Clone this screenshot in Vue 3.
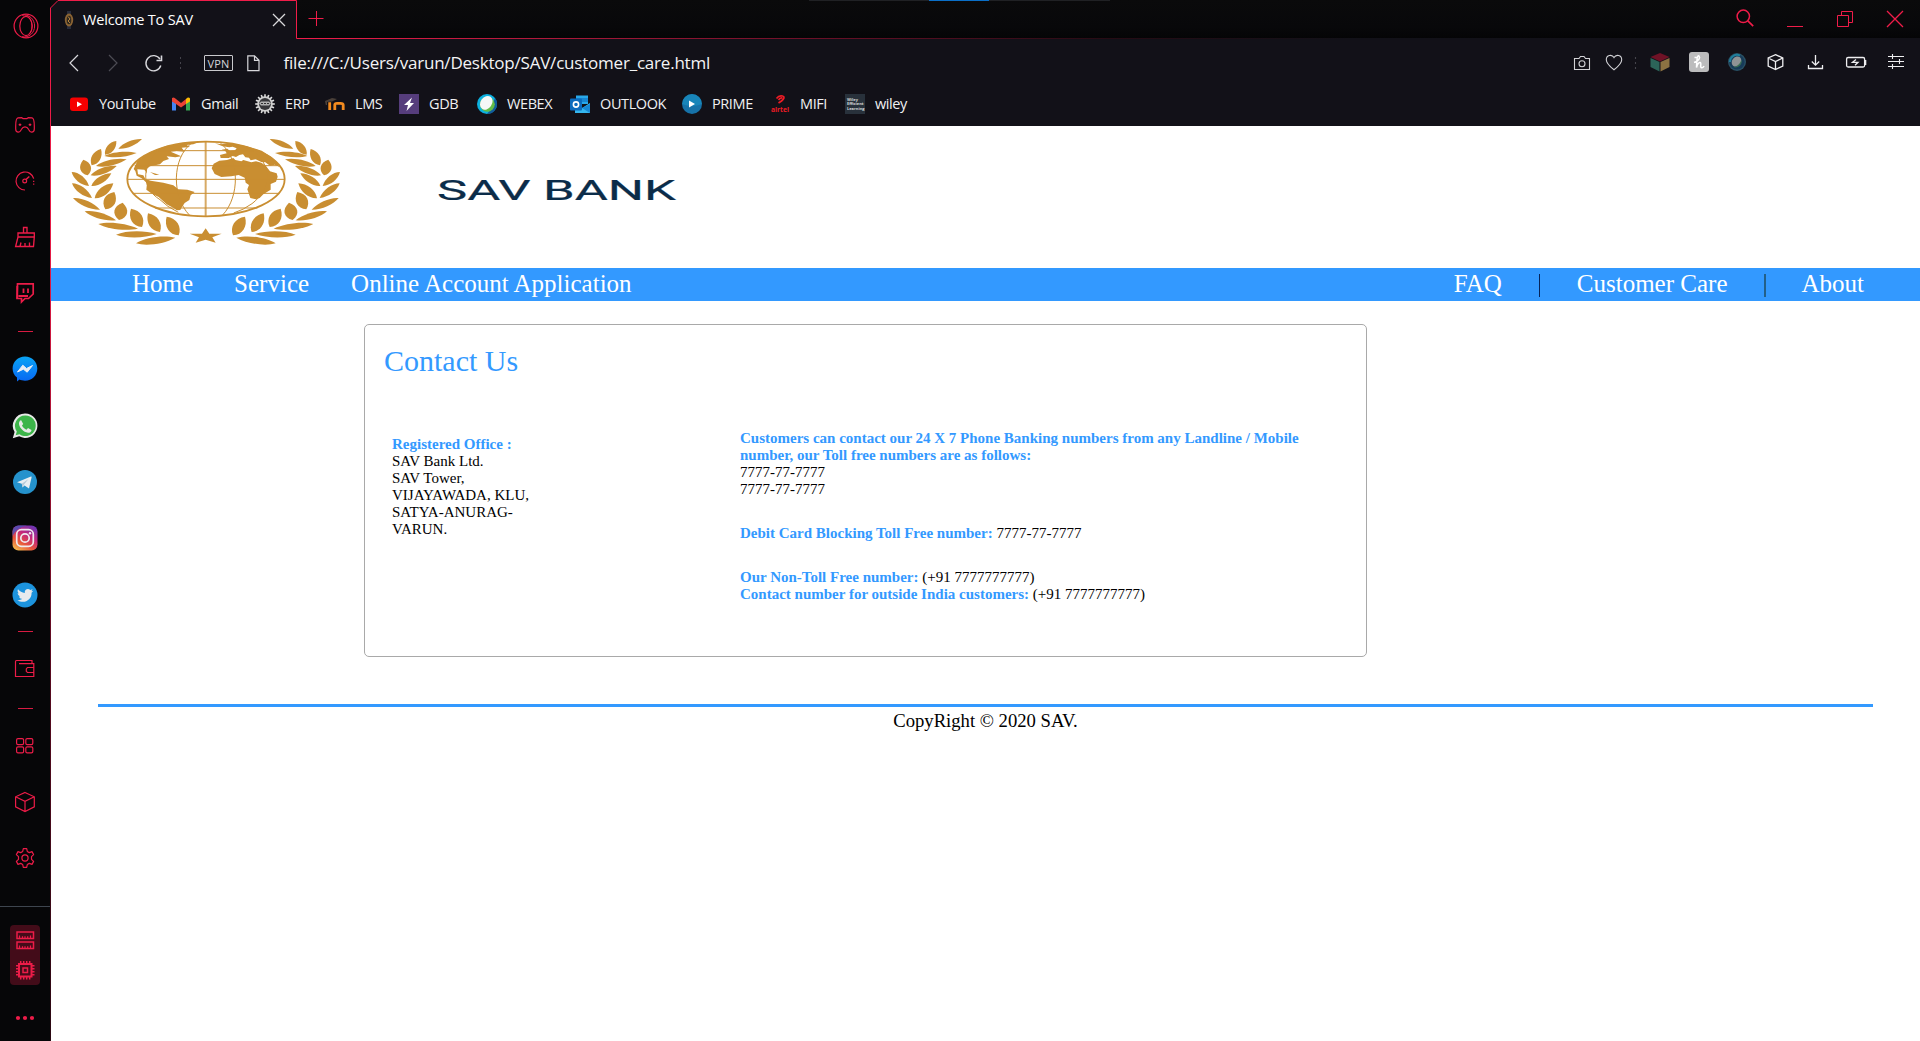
<script setup>
// Tip-to-tip coordinates and width of every leaf in one half of the wreath
const leaves = [
  [205, 71, 276, 42, 16], [165, 89, 199, 48, 22], [163, 93, 260, 84, 15],
  [125, 121, 153, 72, 26], [138, 123, 230, 103, 17], [113, 151, 100, 104, 32],
  [122, 151, 200, 123, 18], [65, 141, 117, 183, 20], [124, 183, 184, 145, 20],
  [66, 175, 126, 219, 20], [134, 220, 190, 175, 24], [69, 219, 150, 254, 18],
  [166, 253, 193, 201, 34], [104, 259, 198, 286, 18], [207, 285, 218, 233, 38],
  [145, 297, 264, 311, 18], [276, 306, 243, 251, 34], [198, 329, 320, 327, 18],
  [330, 321, 294, 265, 32], [258, 355, 376, 338, 20], [386, 331, 350, 275, 34]
].map(([x1, y1, x2, y2, w]) => {
  const dx = x2 - x1
  const dy = y2 - y1
  const len = Math.hypot(dx, dy)
  const nx = (-dy / len) * w * 0.68
  const ny = (dx / len) * w * 0.68
  const at = (t, s) => `${(x1 + dx * t + nx * s).toFixed(1)} ${(y1 + dy * t + ny * s).toFixed(1)}`
  return `M${x1} ${y1}C${at(0.25, 1)} ${at(0.7, 1)} ${x2} ${y2}C${at(0.7, -1)} ${at(0.25, -1)} ${x1} ${y1}Z`
})

const bookmarks = [
  { id: 'youtube', name: 'YouTube', width: 102 },
  { id: 'gmail', name: 'Gmail', width: 84 },
  { id: 'erp', name: 'ERP', width: 70 },
  { id: 'lms', name: 'LMS', width: 74 },
  { id: 'gdb', name: 'GDB', width: 78 },
  { id: 'webex', name: 'WEBEX', width: 93 },
  { id: 'outlook', name: 'OUTLOOK', width: 112 },
  { id: 'prime', name: 'PRIME', width: 88 },
  { id: 'mifi', name: 'MIFI', width: 75 },
  { id: 'wiley', name: 'wiley', width: 80 }
]
const teeth = Array.from({ length: 16 }, (_, i) => i * 22.5)
const pins = [5, 8, 11, 14]
</script>

<template>
  <div class="window">
    <aside class="side">
      <div class="slot opera">
        <svg width="26" height="26" viewBox="0 0 26 26"><circle cx="13" cy="13" r="11.9" /><ellipse cx="13" cy="13" rx="6.2" ry="9.6" /><path d="M9 2.2C16 1 21.6 6 21.6 13S16 25 9 23.8M16 5C20 9 20 17 16 21" stroke-width="1" /></svg>
      </div>
      <div class="slot">
        <svg width="22" height="18" viewBox="0 0 22 18"><path d="M4 1.9 7.6 1.6 9 2.6H13L14.4 1.6 18 1.9C20 2.2 20.3 6 20.3 10V13C20.3 15.5 19 16.2 17.6 16.2 16 16.2 15.5 15 14.5 13.2 13.8 11.8 13.2 10.8 11 10.8S8.2 11.8 7.5 13.2C6.5 15 6 16.2 4.4 16.2 3 16.2 1.7 15.5 1.7 13V10C1.7 6 2 2.2 4 1.9Z" /><path d="M4.7 8.7H7.3M6 7.4V10M14.7 8.7H17.3M16 7.4V10" /></svg>
      </div>
      <div class="slot">
        <svg width="22" height="22" viewBox="0 0 22 22"><path d="M11 20A9 9 0 1 1 19.7 8.6" /><circle cx="10.7" cy="11" r="1.9" /><path d="M12 9.5 15.3 6.5" stroke-width="1.5" /><path d="M19.7 10.7V15" stroke-dasharray="1.3 1.5" /></svg>
      </div>
      <div class="slot">
        <svg width="22" height="22" viewBox="0 0 22 22"><path d="M9.5 7V1.5H13V7M4 7H20.3V11H4ZM4 11 1.6 20.5H19.5L20.3 11M6 20.5 7 16.5M11 20.5V17M15.5 20.5V16.5" stroke-width="1.35" /></svg>
      </div>
      <div class="slot">
        <svg width="20" height="22" viewBox="0 0 20 22"><path d="M2.5 1.8H18.2V12L13.5 16.5H10L6.5 20V16.5H2Z" stroke-width="1.7" /><path d="M2.3 4V16.5M3.5 14H13M8.5 6.5V11M13 6.5V11" stroke-width="1.8" /></svg>
      </div>
      <i class="dash one"></i>
      <div class="slot app">
        <svg class="pic" width="26" height="26" viewBox="0 0 26 26"><defs><linearGradient id="msg" x2="0" y2="1"><stop stop-color="#09a4f5" /><stop offset="1" stop-color="#0867f2" /></linearGradient></defs><path d="M13 .5C20 .5 25.3 5.5 25.3 12.5S20 24.7 13 24.7C11 24.7 8.5 24 7.5 23.5L5 25.5V21.5C2 19.5.6 16 .6 12.5.6 5.5 6 .5 13 .5Z" fill="url(#msg)" /><path d="M5.5 16 10.8 9.2 14.5 12.5 20.5 9.5 15.2 16.2 11.4 13.2Z" fill="#e8edf4" stroke="#e8edf4" /></svg>
      </div>
      <div class="slot app">
        <svg class="pic" width="26" height="26" viewBox="0 0 26 26"><path d="M13.2.5A12.2 12.2 0 1 1 7.2 23.3L.8 25.2 2.6 19A12.2 12.2 0 0 1 13.2.5Z" fill="#e7e9e7" /><path d="M13.2 2.5A10.3 10.3 0 1 1 7.5 21.2L3.7 22.3 4.8 18.6A10.3 10.3 0 0 1 13.2 2.5Z" fill="#3db54a" /><path d="M9.2 7.2 11.2 11 10 12.5C11 14.5 12.5 16 14.5 16.8L16 15 19.5 17C19.5 19 17.5 20 16 19.8 11.5 19 7.5 15 7 11 6.8 9 8 7 9.2 7.2Z" fill="#e7e9e7" /></svg>
      </div>
      <div class="slot app">
        <svg class="pic" width="26" height="26" viewBox="0 0 26 26"><circle cx="13" cy="13" r="12" fill="#2592cc" /><path d="M5 13.2 19 7.5Q20 7.3 19.5 8.8L17 19.5 12.5 16.5 10.5 18.5 9.8 14.7Z" fill="#e8eef2" /><path d="M9.8 14.7 16.5 10 12 15.5 10.5 18.5Z" fill="#b5cad8" /></svg>
      </div>
      <div class="slot app">
        <svg class="pic" width="26" height="26" viewBox="0 0 26 26"><defs><linearGradient id="ig" x1=".2" y1="1" x2=".8" y2="0"><stop stop-color="#f5b84e" /><stop offset=".3" stop-color="#e8573b" /><stop offset=".62" stop-color="#c4267c" /><stop offset="1" stop-color="#6b36b5" /></linearGradient></defs><rect x=".5" y=".5" width="25" height="25" rx="6" fill="url(#ig)" /><path d="M.5 11V6.5A6 6 0 0 1 6.5.5H15Q4 3 .5 11Z" fill="#4453b8" opacity=".8" /><g fill="none" stroke="#efeaee" stroke-width="1.7"><rect x="4.7" y="4.7" width="16.6" height="16.6" rx="4.6" /><circle cx="13" cy="13" r="4.2" /></g><circle cx="18" cy="8.3" r="1.2" fill="#efeaee" /></svg>
      </div>
      <div class="slot app">
        <svg class="pic" width="26" height="26" viewBox="0 0 26 26"><circle cx="13" cy="13" r="12.5" fill="#1c93dd" /><path d="M6 7.3C8 9.5 10 10.8 12.8 11 12.2 7.5 16 5.8 18.3 8L20.6 7.2 19.4 9.2 21.3 8.8 19.6 10.7C19.8 16 15.5 19.8 11 19.8 9 19.8 7 19.3 5.4 18.3 7.3 18.4 9 17.8 10.2 16.8 8.5 16.7 7.4 15.7 7 14.4H8.2C6.7 13.9 5.6 12.5 5.7 11L7 11.4C5.6 10.3 5.2 8.7 6 7.3Z" fill="#e6eaed" /></svg>
      </div>
      <i class="dash two"></i>
      <div class="slot app">
        <svg width="22" height="20" viewBox="0 0 22 20"><path d="M18 4.5V1.5H2.5Q1.5 1.5 1.5 3V17.5H19.8V4.7H5M19.8 8.5H13.5L12.3 10V12.3L13.5 13.5H19.8" /></svg>
      </div>
      <i class="dash three"></i>
      <div class="slot">
        <svg width="20" height="18" viewBox="0 0 20 18"><rect x="1.6" y="1.6" width="7" height="6" rx="1.4" /><rect x="10.8" y="1.6" width="7" height="6" rx="1.4" /><rect x="1.6" y="9.9" width="7" height="6" rx="1.4" /><rect x="10.8" y="9.9" width="7" height="6" rx="1.4" /></svg>
      </div>
      <div class="slot">
        <svg width="22" height="22" viewBox="0 0 22 22"><path d="M11 1.5 20.3 5.8V15.8L11 20.5 1.6 15.8V5.8ZM1.6 5.8 11 10.3 20.3 5.8M11 10.3V20.5" /></svg>
      </div>
      <div class="slot">
        <svg width="20" height="22" viewBox="0 0 20 22"><path d="M8.3 1.6H11.7L12.3 4.5 14.3 5.6 17 4.6 18.6 7.6 16.5 9.7V12.3L18.6 14.4 17 17.4 14.3 16.4 12.3 17.5 11.7 20.4H8.3L7.7 17.5 5.7 16.4 3 17.4 1.4 14.4 3.5 12.3V9.7L1.4 7.6 3 4.6 5.7 5.6 7.7 4.5Z" stroke-linejoin="round" /><circle cx="10" cy="11" r="3.1" /></svg>
      </div>
      <div class="monitor">
        <div class="box">
          <svg width="20" height="20" viewBox="0 0 20 20"><path d="M2 2H18.5V8.5H2ZM2 12H18.5V18.5H2Z" stroke-width="1.5" /><path d="M4.5 5.5V8M7.5 6.2V8M10 6.2V8M12.7 6.2V8M15.5 5.5V8M4.5 15.5V18M7.5 16.2V18M10 16.2V18M12.7 16.2V18M15.5 15.5V18" /></svg>
          <svg width="20" height="20" viewBox="0 0 20 20"><rect x="4" y="4" width="12.5" height="12.5" stroke-width="2" /><rect x="8" y="8" width="4.5" height="4.5" stroke-width="1.5" /><path v-for="p in pins" :key="p" :d="`M${p + 0.7} 1V4M${p + 0.7} 16.5V19.5M1 ${p + 0.7}H4M16.5 ${p + 0.7}H19.5`" stroke-width="1.5" /></svg>
        </div>
        <svg class="dots" width="20" height="6" viewBox="0 0 20 6"><circle cx="3" cy="3" r="2.1" /><circle cx="10" cy="3" r="2.1" /><circle cx="17" cy="3" r="2.1" /></svg>
      </div>
    </aside>
    <div class="edge"></div>

    <section class="main">
      <header class="titlebar">
        <div class="tab">
          <svg class="outline" width="249" height="39" viewBox="0 0 249 39"><path d="M.5 39V8L8 .5H246.5V38.5H249V39Z" fill="#121118" /><path d="M.5 39V8L8 .5H246.5V38.5H249" fill="none" stroke="#f01c49" /></svg>
          <svg class="favicon" width="10" height="18" viewBox="0 0 10 18"><path d="M3 0H7V3H3ZM3 15H7V18H3Z" fill="#292c3b" /><ellipse cx="5" cy="9" rx="4.2" ry="6.5" fill="#8a6333" /><ellipse cx="5" cy="9" rx="2.3" ry="4.3" fill="#30281f" /><path d="M4 5.5 6 8 4 10 6 12" stroke="#b4823b" fill="none" /></svg>
          <span class="tab-title">Welcome To SAV</span>
          <svg class="tab-close" width="14" height="14" viewBox="0 0 14 14"><path d="M1 1 13 13M13 1 1 13" stroke="#d9d9dc" stroke-width="1.3" /></svg>
        </div>
        <svg class="plus" width="16" height="16" viewBox="0 0 16 16"><path d="M.5 7.5H15.5M8.5 0V15" stroke="#f01c49" /></svg>
        <div class="strip"></div>
        <div class="win-actions">
          <svg width="18" height="18" viewBox="0 0 18 18"><circle cx="7.3" cy="7.3" r="6.2" stroke-width="1.5" /><path d="M11.8 11.8 17.2 17.2" stroke-width="1.7" /></svg>
          <svg width="16" height="18" viewBox="0 0 16 18"><path d="M0 17.5H16" /></svg>
          <svg width="16" height="18" viewBox="0 0 16 18"><path d="M.5 6.5H11.5V17.5H.5ZM4.5 6.5V2.5H15.5V13.5H11.5" /></svg>
          <svg width="16" height="18" viewBox="0 0 16 18"><path d="M0 2 16 18M16 2 0 18" stroke-width="1.3" /></svg>
        </div>
      </header>

      <div class="toolbar">
        <svg class="back" width="12" height="18" viewBox="0 0 12 18"><path d="M10 1 2 9 10 17" /></svg>
        <svg class="forward" width="12" height="18" viewBox="0 0 12 18"><path d="M2 1 10 9 2 17" /></svg>
        <svg class="reload" width="18" height="18" viewBox="0 0 18 18"><path d="M15.8 11.5A7.6 7.6 0 1 1 15 5.2" stroke-width="1.4" /><path d="M16.5 1.5V6.5H11.5" stroke-width="1.6" /></svg>
        <i class="sep"></i>
        <span class="vpn">VPN</span>
        <svg class="file" width="13" height="17" viewBox="0 0 13 17"><path d="M.8.8H7.5L12 5.3V15.7H.8ZM7.5.8V5.3H12" /></svg>
        <span class="url">file:///C:/Users/varun/Desktop/SAV/customer_care.html</span>
        <svg class="tools" width="336" height="24" viewBox="1572 51 336 24">
          <g fill="none" stroke="#d2d2d6" stroke-width="1.1">
            <path d="M1574.5 58.5H1579L1580.5 56.5H1584L1585.5 58.5H1589.5V69.5H1574.5Z" /><circle cx="1582" cy="63.7" r="3" />
            <path d="M1614 69.8C1609 65.8 1606.3 63 1606.3 59.7 1606.3 54.8 1612 54 1614 57.6 1616 54 1621.7 54.8 1621.7 59.7 1621.7 63 1619 65.8 1614 69.8Z" />
            <path d="M1635.5 57V70" stroke="#45444c" stroke-dasharray="2 3" />
          </g>
          <path d="M1660 53 1669.5 57 1660 61.5 1650.5 57Z" fill="#6f1226" /><path d="M1650.5 58 1659.5 62V71.5L1650.5 67Z" fill="#2c6459" /><path d="M1669.5 58 1660.5 62V71.5L1669.5 67Z" fill="#8c7242" />
          <rect x="1689" y="52" width="20" height="20" rx="3" fill="#bcbcbd" /><path d="M1694 62.5C1699 61 1700.5 57.5 1699 56 1697 55 1696.8 60 1696.5 67.5C1697.5 62.5 1700.5 61.5 1700.8 63.5 1701 65 1700 68 1702 67.8 1703 67.7 1703.7 66.8 1704 66M1694.5 57.5H1697" fill="none" stroke="#fff" stroke-width="1.5" />
          <circle cx="1737" cy="62" r="9" fill="#295064" /><circle cx="1737" cy="62" r="7.6" fill="#173b59" /><path d="M1730 62A7 7 0 0 1 1740 55.6" fill="none" stroke="#1f7f9c" stroke-width="2" /><ellipse cx="1736.5" cy="61.5" rx="4.4" ry="5.4" transform="rotate(40 1736.5 61.5)" fill="#8f9395" /><path d="M1733 67Q1739 66.5 1741.5 60C1743 64 1738 69 1733 67Z" fill="#396d53" />
          <g fill="none" stroke="#eeeef0" stroke-width="1.3">
            <path d="M1775.5 54.7 1782.8 58V66L1775.5 69.5 1768.2 66V58ZM1768.2 58 1775.5 61.5 1782.8 58M1775.5 61.5V69.5" />
            <path d="M1815.5 55V65M1811.8 61.5 1815.5 65.2 1819.2 61.5M1808.5 65V68.5H1822.5V65" />
            <rect x="1846.6" y="57.5" width="18" height="9.5" rx="1.5" /><path d="M1865.5 60V65" stroke-width="1.6" /><path d="M1856 59.5 1852.5 62.3H1858L1855 65.3" />
            <path d="M1888 56.5H1904M1888 61.5H1904M1888 66.5H1904M1892.5 54V59M1899.5 59V64M1892.5 64V69" stroke-width="1.1" />
          </g>
        </svg>
      </div>

      <nav class="bookmarks">
        <div v-for="b in bookmarks" :key="b.id" class="bookmark" :style="{ width: b.width + 'px' }">
          <svg width="20" height="20" viewBox="0 0 20 20">
            <g v-if="b.id === 'youtube'"><rect x="1" y="3.5" width="18" height="13.5" rx="3" fill="#f60000" /><path d="M8 7.5V13L13 10.2Z" fill="#fff" /></g>
            <g v-else-if="b.id === 'gmail'"><path d="M1 7V16.5H5V9Z" fill="#4285f4" /><path d="M19 7V16.5H15V9Z" fill="#34a853" /><path d="M1 7.5V4Q3 2.5 5 5L10 9 15 5V10L10 13.6 5 10Z" fill="#ea4335" /><path d="M15 5Q17.5 2.5 19 4.5V7.5L15 10Z" fill="#fbbc04" /></g>
            <g v-else-if="b.id === 'erp'"><path v-for="t in teeth" :key="t" d="M10 .2V3" stroke="#ddd" stroke-width="1.6" :transform="`rotate(${t} 10 10)`" /><circle cx="10" cy="10" r="7.8" fill="#d0d0d0" /><circle cx="10" cy="10" r="6" fill="#37373a" /><path d="M4 9.5 6 7.5H14L16 9.5 14 11.5H6Z" fill="#b0b0b0" /><path d="M6 9.5H14" stroke="#333" stroke-dasharray="2 1" /></g>
            <g v-else-if="b.id === 'lms'"><path d="M0 7 7 4 12 5 7 7.5 2 8V11H.8Z" fill="#4a4039" /><path d="M4.7 16V8.2M9.8 16V10.8Q9.8 9.3 12 9.3H15.5Q18.2 9.3 18.2 11V16" fill="none" stroke="#f28b1f" stroke-width="2.8" /></g>
            <g v-else-if="b.id === 'gdb'"><rect width="20" height="20" fill="#563d7c" /><path d="M13 3.5 5 11H9L7.5 17 15 9H11Z" fill="#fff" /></g>
            <g v-else-if="b.id === 'webex'"><circle cx="10" cy="10" r="10" fill="#0cb0df" /><path d="M10 20A10 10 0 0 0 18 4L14 15Z" fill="#115c9b" /><circle cx="10.3" cy="10.2" r="7.5" fill="#63bc47" /><ellipse cx="9.3" cy="8.8" rx="5.7" ry="7.4" transform="rotate(35 9.3 8.8)" fill="#f5f8f7" /></g>
            <g v-else-if="b.id === 'outlook'"><path d="M6 1.5H18V10H6Z" fill="#29a8e9" /><path d="M6 4H18V8H6Z" fill="#1786d2" /><path d="M5 10 12 14 20 9V19H5Z" fill="#35b7ef" /><path d="M12 14 20 19V10Z" fill="#1687d4" /><rect y="4.5" width="12" height="12" rx="1" fill="#0b6bbe" /><circle cx="6" cy="10.5" r="2.6" fill="none" stroke="#fff" stroke-width="1.6" /></g>
            <g v-else-if="b.id === 'prime'"><circle cx="10" cy="10" r="10" fill="#1672a8" /><path d="M0 10A10 10 0 0 1 20 10Q10 14 0 10Z" fill="#1c96c6" opacity=".55" /><path d="M7 6.5V13.5L13 10Z" fill="#fff" /></g>
            <g v-else-if="b.id === 'mifi'"><path d="M6.5 4.5Q9 1 12.5 2T11.5 7L8.5 9M12.5 4Q10 3.5 8.5 6" fill="none" stroke="#ee1c25" stroke-width="1.7" /><text x="1" y="18" class="airtel" textLength="18" lengthAdjust="spacingAndGlyphs">airtel</text></g>
            <g v-else><rect width="20" height="20" fill="#28313b" /><text class="wiley" x="2" y="6.5">Wiley</text><text class="wiley" x="2" y="11.3">Efficient</text><text class="wiley" x="2" y="16">Learning</text></g>
          </svg>
          <span>{{ b.name }}</span>
        </div>
      </nav>

      <main class="page">
        <div class="brand">
          <svg class="emblem" width="273.33" height="113.33" viewBox="60 30 820 340">
            <g fill="#c98e31">
              <path v-for="(d, i) in leaves" :key="i" :d="d" />
              <g transform="translate(935 0) scale(-1 1)"><path v-for="(d, i) in leaves" :key="i" :d="d" /></g>
              <path d="M467 310 478 326 515 326 487 337 497 353 467 344 437 353 447 337 419 326 456 326Z" />
              <path d="M251 132 262 108 300 82 350 62 430 52 450 50 430 58 410 60 420 66 395 68 404 80 380 78 362 80 394 94 376 97 350 94 357 102 340 108 330 118 300 124 290 132 291 145 283 134 262 133 264 148 280 151 286 162 302 167 340 173 370 181 385 193 412 194 434 201 422 211 418 225 404 234 396 246 391 255 380 256 372 250 350 238 326 216 306 206 289 194 291 174 275 160 260 152 256 138Z" />
              <path d="M300 141 318 146 328 150 315 150Z" />
              <path d="M485 130 491 116 508 107 531 105 550 99 556 105 574 109 580 105 604 112 618 109 634 113 648 123 660 139 680 145 683 155 678 170 662 177 662 194 640 208 629 219 617 223 601 219 592 193 597 180 587 173 584 158 566 150 544 154 514 156 494 147Z" />
              <path d="M495 55 515 58 540 55 590 63 635 77 665 96 681 112 688 126 674 119 660 122 646 112 634 111 617 103 602 106 597 98 586 97 579 88 568 90 558 96 548 93 536 99 512 99 510 90 530 85 526 78 515 74 532 71 540 78 555 76 560 70 548 65 538 67 518 64Z" />
            </g>
            <g fill="none" stroke="#c98e31">
              <ellipse cx="468" cy="162" rx="236" ry="112" stroke-width="5.5" />
              <g stroke-width="3">
                <path d="M467 50V274" stroke-width="6" opacity=".75" /><path d="M326 77H610M254 122H682M232 163H704M250 205H686M315 249H622" />
                <path d="M425 54C365 100 365 215 418 270M511 54C570 100 570 215 518 270M318 84C275 130 275 190 330 224Q350 245 385 262M618 84C665 130 665 190 606 236Q580 255 551 264" />
              </g>
            </g>
          </svg>
          <svg class="wordmark" width="244" height="30" viewBox="0 0 244 30"><text x="2" y="25" textLength="239" lengthAdjust="spacingAndGlyphs">SAV BANK</text></svg>
        </div>

        <nav class="menu">
          <a class="home">Home</a><a class="service">Service</a><a>Online Account Application</a>
          <div class="right"><a>FAQ</a><i></i><a>Customer Care</a><i class="second"></i><a>About</a></div>
        </nav>

        <section class="card">
          <h1>Contact Us</h1>
          <div class="columns">
            <address><b>Registered Office :</b><br>SAV Bank Ltd.<br>SAV Tower,<br>VIJAYAWADA, KLU,<br>SATYA-ANURAG-<br>VARUN.</address>
            <div class="phones">
              <p><b>Customers can contact our 24 X 7 Phone Banking numbers from any Landline / Mobile<br>number, our Toll free numbers are as follows:</b><br>7777-77-7777<br>7777-77-7777</p>
              <p><b>Debit Card Blocking Toll Free number:</b> 7777-77-7777</p>
              <p><b>Our Non-Toll Free number:</b> (+91 7777777777)<br><b>Contact number for outside India customers:</b> (+91 7777777777)</p>
            </div>
          </div>
        </section>

        <footer>CopyRight © 2020 SAV.</footer>
      </main>
    </section>
  </div>
</template>

<style>
body { margin: 0; background: #fff; overflow: hidden; }
</style>

<style scoped>
* { box-sizing: border-box; }
svg { display: block; flex: none; overflow: visible; }
.window { display: flex; width: 1920px; height: 1041px; font-family: "Open Sans", "Noto Sans", sans-serif; overflow: hidden; }
.side { width: 50px; background: #060608; display: flex; flex-direction: column; }
.side svg:not(.pic) { fill: none; stroke: #ec1c48; stroke-width: 1.2; }
.slot { height: 56px; flex: none; display: flex; align-items: center; justify-content: center; }
.slot.opera { height: 51px; margin-bottom: 46px; padding-left: 1px; }
.slot.app { height: 56.4px; }
.dash { height: 1px; width: 15px; flex: none; background: #d81b42; margin: 10px 0 10px 18px; }
.dash.one { margin-bottom: 9px; }
.dash.two { margin: 8px 0 9px 18px; }
.dash.three { margin: 11px 0 9px 18px; }
.monitor { margin-top: auto; height: 135px; flex: none; border-top: 1px solid #3e454f; display: flex; flex-direction: column; align-items: center; }
.box { width: 30px; height: 60px; margin-top: 18px; border-radius: 4px; background: #430c19; display: flex; flex-direction: column; align-items: center; justify-content: space-between; padding: 5px 0; }
.side .monitor .dots { fill: #ec1c48; stroke: none; margin-top: 30px; }
.edge { width: 1px; margin-top: 8px; background: linear-gradient(#f01c49 0%, #e31a45 25%, #5a0a20 63%, #2a0812 100%); box-shadow: 0 -8px 0 #070709; }
.main { width: 1869px; display: flex; flex-direction: column; }

.titlebar { height: 39px; position: relative; display: flex; align-items: flex-start; background: linear-gradient(#0a0a0b, #08080a 70%, #050506); }
.titlebar::after { content: ""; position: absolute; left: 246px; right: 0; top: 38px; height: 1px; background: linear-gradient(90deg, #f01c49, #b0193b 15%, #6b1027 32%, #260b14 50%, #121118 65%); }
.tab { position: relative; width: 247px; height: 39px; display: flex; align-items: center; }
.outline { position: absolute; left: -1px; top: 0; }
.favicon { position: relative; margin-left: 13px; }
.tab-title { position: relative; margin-left: 9px; width: 175px; color: #fff; font-size: 14.5px; letter-spacing: -.18px; white-space: nowrap; line-height: 38px; }
.tab-close { position: relative; margin-left: 14px; }
.plus { margin: 11px 0 0 10px; }
.strip { height: 1px; width: 301px; margin-left: 485px; background: linear-gradient(90deg, #202124 120px, #0a6fc8 120px, #0a6fc8 180px, #202124 180px); }
.win-actions { margin: 9px 17px 0 auto; display: flex; gap: 33px; fill: none; stroke: #f01c49; }
.win-actions svg:nth-child(n+3) { margin-left: 1px; }

.toolbar { height: 48px; background: #121118; display: flex; align-items: center; fill: none; stroke: #d8d8dc; stroke-width: 1.2; padding-right: 12px; }
.back { margin-left: 16.5px; }
.forward { margin-left: 27.5px; stroke: #4d4c54; }
.reload { margin-left: 26px; }
.sep { width: 1px; height: 13px; margin-left: 17px; background: repeating-linear-gradient(#45444c 0 2px, transparent 2px 5px); }
.vpn { width: 29px; height: 16px; margin-left: 23px; border: 1px solid #c9c9cd; border-radius: 1px; color: #d4d4d8; font-size: 11px; line-height: 15px; text-align: center; letter-spacing: .1px; }
.file { margin-left: 13.5px; }
.url { margin-left: 24px; color: #f4f4f5; font-size: 17px; letter-spacing: -.21px; line-height: 24px; white-space: nowrap; }
.tools { margin-left: auto; stroke: none; }

.bookmarks { height: 39px; background: #121118; padding: 0 0 5px 18px; display: flex; align-items: center; }
.bookmark { display: flex; align-items: center; gap: 10px; color: #f0f0f2; font-size: 14.5px; letter-spacing: -.4px; line-height: 20px; white-space: nowrap; flex: none; }
.airtel { font: bold 7px "Open Sans", sans-serif; fill: #ee1c25; letter-spacing: 0; }
.wiley { font: bold 4px "Open Sans", sans-serif; fill: #d5d8da; letter-spacing: 0; }

.page { flex: 1; background: #fff; font-family: "Liberation Serif", "Times New Roman", serif; color: #000; }
.brand { height: 142px; display: flex; padding: 9px 0 0 18.5px; }
.wordmark { margin: 40px 0 0 92px; }
.wordmark text { font: 400 27px Roboto, sans-serif; fill: #0b2c49; stroke: #0b2c49; stroke-width: .2; }
.menu { height: 33px; background: #3399ff; color: #fff; display: flex; align-items: flex-start; padding-left: 81px; font-size: 25px; line-height: 31px; white-space: nowrap; }
.home { margin-right: 41px; }
.service { margin-right: 42px; }
.right { margin-left: auto; margin-right: 56px; display: flex; }
.right i { width: 1px; height: 23px; margin: 6px 37px 0; background: #06245a; }
.right i.second { width: 2px; background: #236089; margin: 6px 36px 0; }
.card { width: 1003px; height: 333px; margin: 23px 0 0 313px; border: 1px solid #a9a9a9; border-radius: 5px; }
h1 { margin: 19px 0 0 19px; font-size: 30px; font-weight: 400; line-height: 34px; color: #3399ff; }
.columns { display: flex; font-size: 15px; line-height: 17px; white-space: nowrap; padding-top: 52px; }
b { color: #3399ff; font-weight: 700; }
address { font-style: normal; margin: 6px 0 0 27px; width: 348px; }
.phones p { margin: 0 0 27px; }
footer { width: 1775px; margin: 47px 0 0 47px; border-top: 3px solid #3399ff; text-align: center; font-size: 18.67px; line-height: 27px; }
</style>
